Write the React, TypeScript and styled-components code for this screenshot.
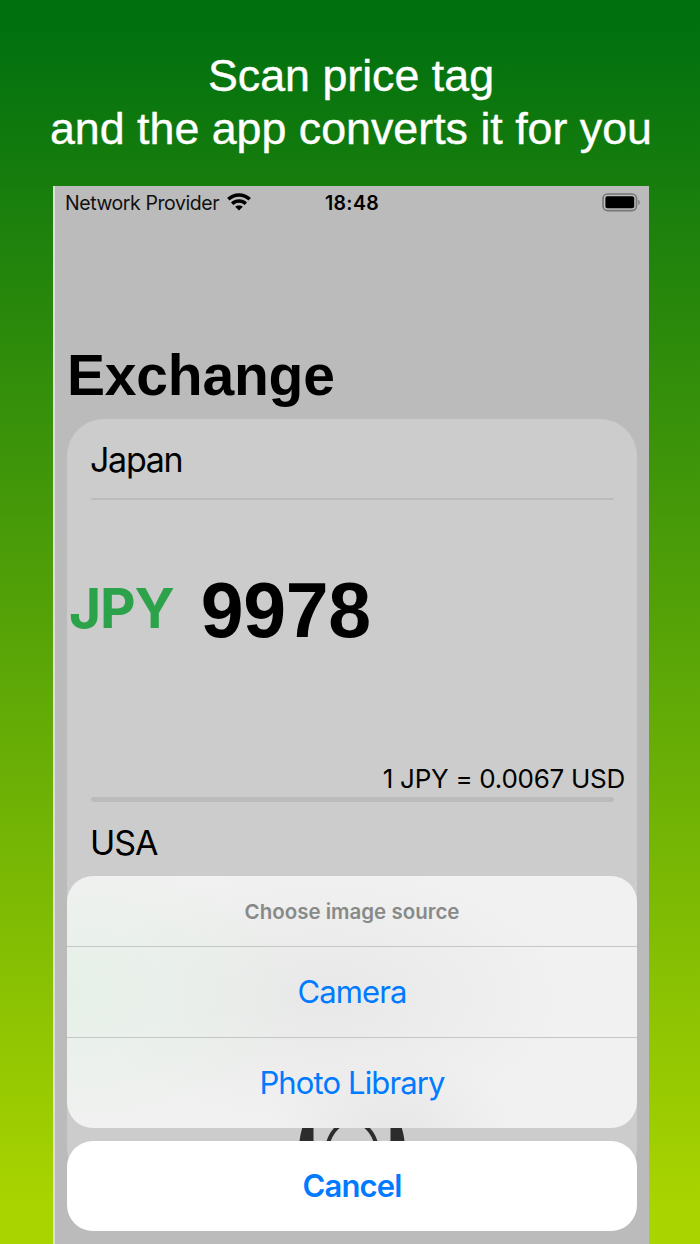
import React from 'react';
import styled, { createGlobalStyle } from 'styled-components';

const GlobalStyle = createGlobalStyle`
  * { box-sizing: border-box; }
  html, body { margin: 0; padding: 0; }
`;

const ui = `Inter, 'Liberation Sans', sans-serif`;
const helvetica = `'Liberation Sans', Arial, sans-serif`;

const Poster = styled.main`
  width: 700px;
  height: 1244px;
  overflow: hidden;
  display: flex;
  flex-direction: column;
  align-items: center;
  padding-left: 2px;
  background: linear-gradient(180deg, #00700f 0%, #00700f 2%, #a9d400 97%, #a9d400 100%);
`;

const Headline = styled.h1`
  height: 186px;
  margin: 0;
  padding-top: 49px;
  color: #fff;
  font: 400 44.75px/53px ${helvetica};
  -webkit-text-stroke: 0.4px #fff;
  text-align: center;
  white-space: nowrap;
`;

const Phone = styled.section`
  position: relative;
  width: 596px;
  flex: 1;
  padding: 0 12px;
  border-left: 2px solid #dedede;
  background: #bbb;
  overflow: hidden;
`;

const StatusBar = styled.header`
  display: grid;
  grid-template-columns: 1fr auto 1fr;
  align-items: center;
  height: 33px;
  margin: 0 -4px 0 -2px;
  color: #111;
  font: 400 19.5px/32px ${ui};
`;

const Carrier = styled.div`
  display: flex;
  align-items: center;
  gap: 7.5px;
  padding-top: 1px;
  letter-spacing: -0.43px;
  white-space: nowrap;

  svg {
    margin-bottom: 2px;
  }
`;

const Clock = styled.time`
  padding: 1px 2px 0 0;
  color: #000;
  font-weight: 600;
  letter-spacing: 0.3px;
`;

const BatterySlot = styled.div`
  display: flex;
  justify-content: flex-end;
  padding-bottom: 1px;
`;

const PageTitle = styled.h2`
  height: 200px;
  margin: 0;
  padding-top: 123px;
  font: 700 57px/66px ${helvetica};
  letter-spacing: -0.2px;
  color: #000;
`;

const Card = styled.div`
  width: 570px;
  height: 766px;
  padding: 0 24px;
  border-radius: 37px;
  background: #ccc;
`;

const Country = styled.div<{ $height: number; $tracking: number; $drop?: number }>`
  display: flex;
  align-items: center;
  height: ${(p) => p.$height}px;
  padding-top: ${(p) => p.$drop ?? 0}px;
  margin-left: -1px;
  color: #000;
  font: 400 34px/40px ${ui};
  letter-spacing: ${(p) => p.$tracking}px;
`;

const Divider = styled.div<{ $thickness: number }>`
  width: 523px;
  height: ${(p) => p.$thickness}px;
  margin-left: -0.5px;
  border-radius: 3px;
  background: #bbb;
`;

const Amount = styled.div`
  display: flex;
  align-items: center;
  gap: 27px;
  height: 219px;
  margin-left: -22px;
`;

const Code = styled.span`
  padding-bottom: 4px;
  color: #2ca24a;
  font: 700 55px/66px ${ui};
  letter-spacing: -1.1px;
`;

const Value = styled.span`
  color: #000;
  font: 700 77px/88px ${helvetica};
  letter-spacing: -0.3px;
`;

const Rate = styled.div`
  height: 78px;
  padding-top: 43px;
  margin-right: -12px;
  color: #000;
  font: 400 26px/34px ${ui};
  letter-spacing: -0.27px;
  text-align: right;
  white-space: nowrap;
`;

const ScanIcon = styled.svg`
  display: block;
  margin: 242px auto 0;
`;

const ActionSheet = styled.div`
  position: absolute;
  left: 12px;
  bottom: 13px;
  width: 570px;
  display: flex;
  flex-direction: column;
  gap: 13px;
`;

const Options = styled.div`
  height: 252px;
  border-radius: 26px;
  overflow: hidden;
  background:
    radial-gradient(ellipse 230px 130px at 0% 46%, #e6f0e8 0%, rgba(230, 240, 232, 0) 100%),
    radial-gradient(ellipse 120px 70px at 57% 100%, #e7e7e7 0%, rgba(231, 231, 231, 0) 100%),
    radial-gradient(ellipse 240px 130px at 45% 48%, #e7e8e7 0%, rgba(231, 232, 231, 0) 100%),
    #f0f1f0;
`;

const SheetTitle = styled.div`
  height: 70px;
  color: #888a89;
  font: 600 20.5px/71px ${ui};
  text-align: center;
`;

const SheetButton = styled.button<{ $primary?: boolean }>`
  display: block;
  width: 100%;
  height: ${(p) => (p.$primary ? 90 : 91)}px;
  padding: 0;
  border: 0;
  border-top: ${(p) => (p.$primary ? '0' : '1px solid #c4c7c5')};
  border-radius: ${(p) => (p.$primary ? 26 : 0)}px;
  background: ${(p) => (p.$primary ? '#fff' : 'transparent')};
  color: #007aff;
  font: ${(p) => (p.$primary ? 600 : 400)} 31px/90px ${ui};
  letter-spacing: -0.88px;
  text-align: center;
`;

const WifiIcon = () => (
  <svg width="24" height="18" viewBox="0 0 24 18" fill="none" stroke="#000" strokeWidth="3.5">
    <path d="M1.3 6.3C7.3 .4 16.7 .4 22.7 6.3" />
    <path d="M5.2 10.7C9 7.1 15 7.1 18.8 10.7" />
    <path d="M12 17.6L8.2 13.8C10.2 11.9 13.8 11.9 15.8 13.8Z" fill="#000" stroke="none" />
  </svg>
);

const BatteryIcon = () => (
  <svg width="39" height="19" viewBox="0 0 39 19">
    <rect x="1" y="1" width="33.5" height="16.6" rx="4.5" fill="none" stroke="#777" strokeWidth="1.6" />
    <rect x="3.4" y="3.3" width="28.8" height="12" rx="2" fill="#000" />
    <path d="M36.3 6.8C38.2 7.5 38.2 11.3 36.3 12Z" fill="#777" />
  </svg>
);

export default function App() {
  return (
    <>
      <GlobalStyle />
      <Poster>
        <Headline>
          Scan price tag
          <br />
          and the app converts it for you
        </Headline>
        <Phone>
          <StatusBar>
            <Carrier>
              Network Provider
              <WifiIcon />
            </Carrier>
            <Clock>18:48</Clock>
            <BatterySlot>
              <BatteryIcon />
            </BatterySlot>
          </StatusBar>
          <PageTitle>Exchange</PageTitle>
          <Card>
            <Country $height={79} $tracking={-1.3} $drop={2}>Japan</Country>
            <Divider $thickness={2} />
            <Amount>
              <Code>JPY</Code>
              <Value>9978</Value>
            </Amount>
            <Rate>1 JPY = 0.0067 USD</Rate>
            <Divider $thickness={5} />
            <Country $height={81} $tracking={-1}>USA</Country>
            <ScanIcon width="106" height="16" viewBox="0 0 106 16">
              <path d="M0.5 16C1.5 9 2.5 4 4.5 0H14.5V16Z M105.5 16C104.5 9 103.5 4 101.5 0H91.5V16Z" fill="#2c2c2c" />
              <path d="M29 18C31 11 35 5 40 1M77 18C75 11 71 5 66 1" fill="none" stroke="#2c2c2c" strokeWidth="4" />
            </ScanIcon>
          </Card>
          <ActionSheet>
            <Options>
              <SheetTitle>Choose image source</SheetTitle>
              <SheetButton>Camera</SheetButton>
              <SheetButton>Photo Library</SheetButton>
            </Options>
            <SheetButton $primary>Cancel</SheetButton>
          </ActionSheet>
        </Phone>
      </Poster>
    </>
  );
}
